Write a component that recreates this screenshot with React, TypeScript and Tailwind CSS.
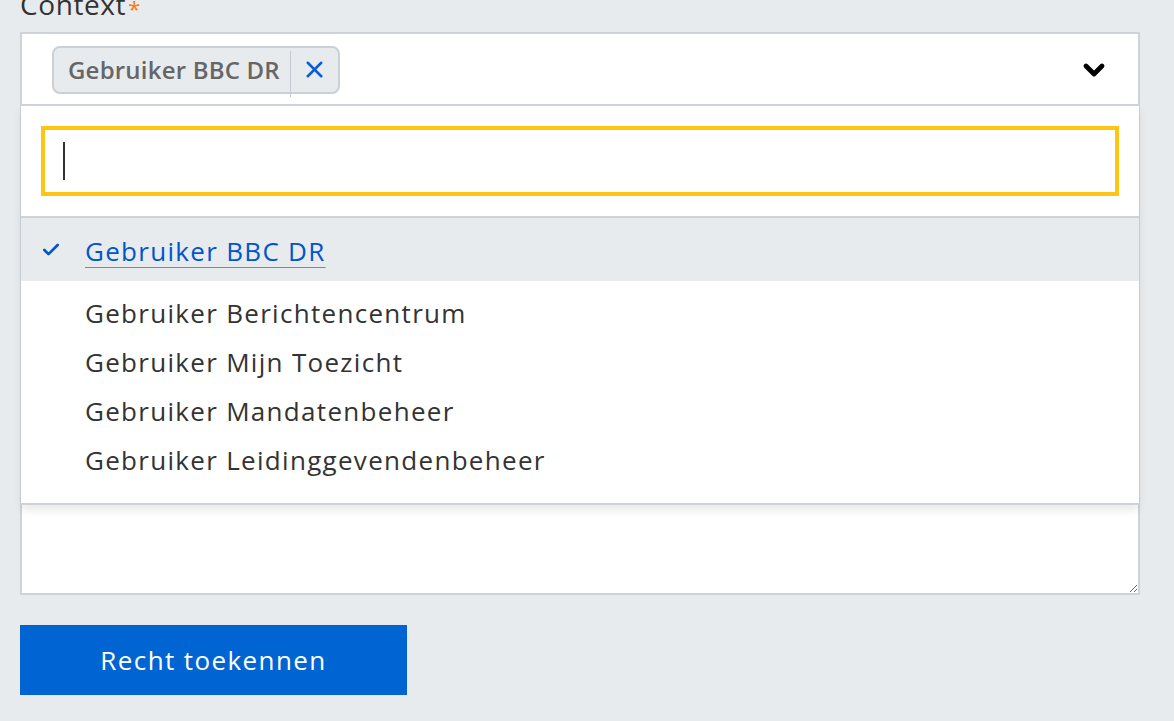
import { Check, ChevronDown, X } from "lucide-react";

const options = [
  "Gebruiker Berichtencentrum",
  "Gebruiker Mijn Toezicht",
  "Gebruiker Mandatenbeheer",
  "Gebruiker Leidinggevendenbeheer",
];

export default function App() {
  return (
    <div
      className="min-h-screen w-full overflow-hidden bg-[#e8ebee] text-[#333332]"
      style={{ fontFamily: '"Open Sans", "Noto Sans", sans-serif' }}
    >
      <div className="w-[1120px] ml-[20px]">
        {/* Label */}
        <label className="block mt-[-14px] h-[46px] text-[28px] leading-[36px] tracking-[0.6px] text-[#333332]">
          Context<span className="ml-[2px] text-[#ff7a00] text-[22px] align-middle">*</span>
        </label>

        <div className="relative">
          {/* Select header */}
          <div className="h-[73px] bg-white border-2 border-b-0 border-[#cdd3d9] flex items-center pl-[30px] pr-[30px]">
            <div className="flex items-center h-[48px] rounded-[8px] border-2 border-[#cad0d6] bg-[#e8ebee]">
              <span className="pl-[14px] pr-[10px] text-[24px] font-semibold text-[#666666] tracking-[0.2px]">
                Gebruiker BBC DR
              </span>
              <span className="h-[46px] mt-[8px] border-l border-[#c2c9d0]" />
              <span className="pl-[10px] pr-[10px] text-[#0b5cd5]">
                <X size={27} strokeWidth={2.2} />
              </span>
            </div>
            <ChevronDown size={32} strokeWidth={3.6} className="ml-auto text-black mr-[-2px]" />
          </div>

          {/* Textarea behind dropdown */}
          <textarea
            className="block w-full h-[490px] bg-white border-2 border-[#cdd3d9] resize-y outline-none"
            defaultValue=""
          />

          {/* Dropdown */}
          <div className="absolute left-[1px] right-[1px] top-[72px] bg-white border-t-2 border-b-2 border-[#cdd3d9] shadow-[0_6px_8px_rgba(0,0,0,0.08)]">
            <div className="px-[20px] py-[20px] border-b-2 border-[#cdd3d9]">
              <div className="h-[70px] border-4 border-[#ffc515] flex items-center pl-[18px]">
                <span className="w-[2px] h-[38px] bg-[#333332]" />
              </div>
            </div>
            <ul className="tracking-[1.3px]">
              <li className="h-[63px] bg-[#e8ebee] flex items-center pl-[20px]">
                <Check size={20} strokeWidth={3.2} className="text-[#0055cc] mr-[24px]" />
                <span className="text-[26px] text-[#0055cc] underline decoration-[1px] underline-offset-[6px] decoration-[#5a8fd8] mt-[4px]">
                  Gebruiker BBC DR
                </span>
              </li>
              <li className="h-[8px]" />
              {options.map((o) => (
                <li key={o} className="h-[49px] flex items-center pl-[64px] text-[26px]">
                  {o}
                </li>
              ))}
              <li className="h-[18px]" />
            </ul>
          </div>
        </div>

        {/* Submit */}
        <button className="mt-[30px] w-[387px] h-[70px] bg-[#0064d2] text-white text-[26px] tracking-[1.4px]">
          Recht toekennen
        </button>
      </div>
    </div>
  );
}
